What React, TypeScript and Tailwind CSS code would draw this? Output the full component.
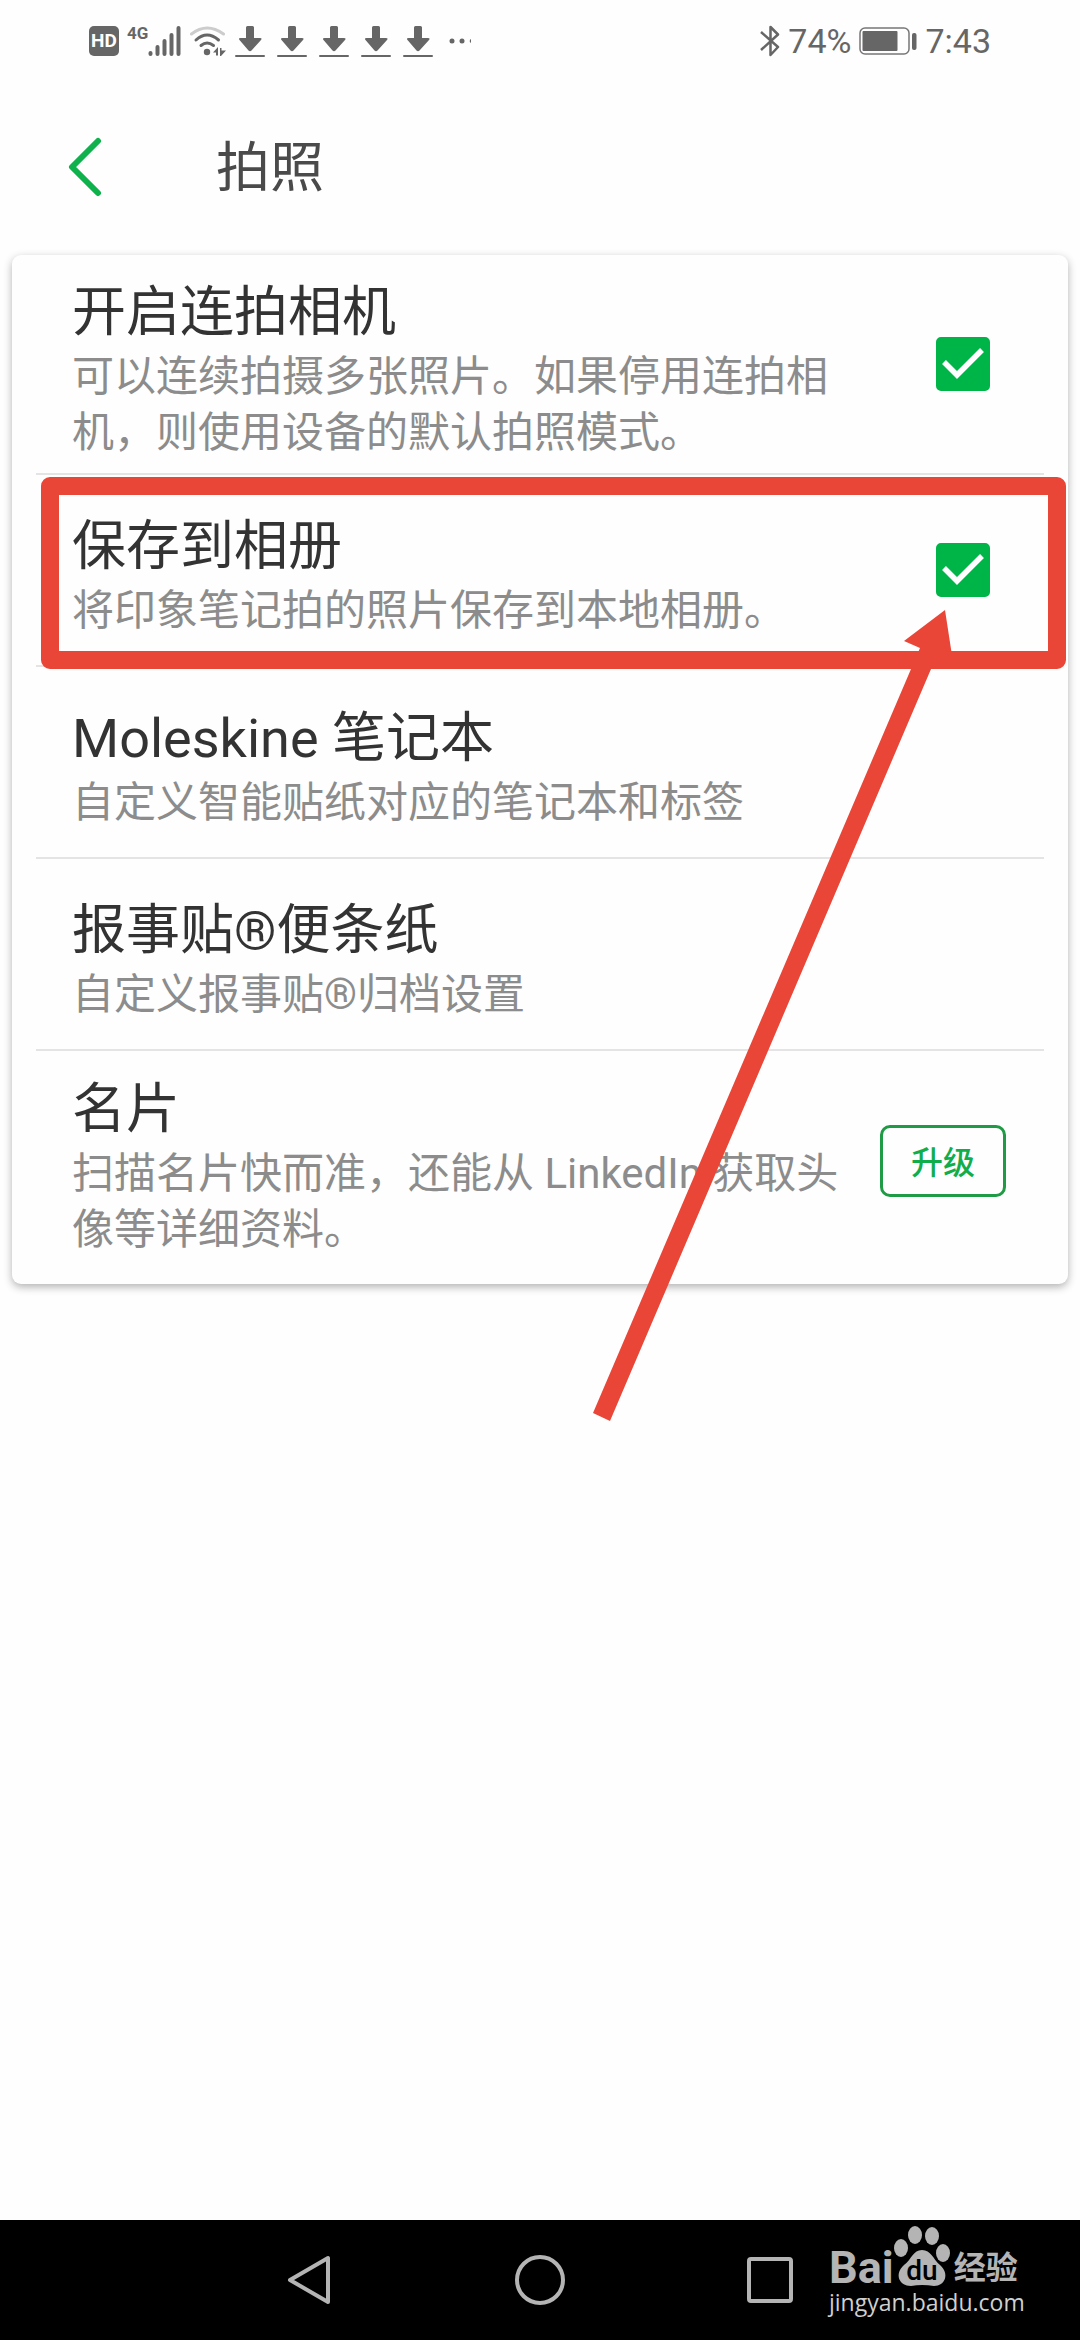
import React, { useState } from "react";

interface Setting {
  id: string;
  title: string;
  description: string;
  control?: "checkbox" | "upgrade";
  highlighted?: boolean;
}

const settings: Setting[] = [
  {
    id: "burst",
    title: "开启连拍相机",
    description: "可以连续拍摄多张照片。如果停用连拍相机，则使用设备的默认拍照模式。",
    control: "checkbox",
  },
  {
    id: "album",
    title: "保存到相册",
    description: "将印象笔记拍的照片保存到本地相册。",
    control: "checkbox",
    highlighted: true,
  },
  {
    id: "moleskine",
    title: "Moleskine 笔记本",
    description: "自定义智能贴纸对应的笔记本和标签",
  },
  {
    id: "postit",
    title: "报事贴®便条纸",
    description: "自定义报事贴®归档设置",
  },
  {
    id: "card",
    title: "名片",
    description: "扫描名片快而准，还能从 LinkedIn 获取头像等详细资料。",
    control: "upgrade",
  },
];

function DownloadIcon() {
  return (
    <svg width="30" height="32" viewBox="0 0 30 32" fill="#666">
      <path d="M11 2.5Q11 1 12.500 1H17.500Q19 1 19 2.500V13H25Q27.500 13 26 15L16.500 25.500Q15 27 13.500 25.500L4.500 15Q3 13 5.500 13H11Z" />
      <rect x="0" y="30" width="30" height="2" rx="1" />
    </svg>
  );
}

function StatusBar() {
  return (
    <div className="flex h-[82px] items-center justify-between pr-[89px] pl-[89px] text-[34px] leading-10 text-[#666]">
      <div className="flex items-center">
        <span className="flex size-[30px] items-center justify-center rounded-[5px] bg-[#666] text-[19px] leading-5 font-bold text-white">
          HD
        </span>
        <span className="ml-2 self-start text-[17px] leading-4 font-bold">4G</span>
        <svg width="33" height="32" viewBox="0 0 33 32" stroke="#666" strokeWidth="4" strokeLinecap="round">
          <path d="M2.500 28V29M9.500 22V29M16.500 16V29M23.500 10V29M30.500 3V29" />
        </svg>
        <svg className="ml-2" width="38" height="32" viewBox="0 0 38 32" fill="none" strokeLinecap="round" strokeWidth="3">
          <path d="M2.500 9Q18 -3 34.500 9" stroke="#ccc" />
          <path d="M7 15Q18 5 29.500 15M12 20.500Q18 15.500 24.500 20.500" stroke="#666" />
          <circle cx="18" cy="27" r="3.200" fill="#666" />
          <path d="M24 27.500L29 22V30.500H27V27.500ZM31 23H32.500V25.500H37L32 31H31Z" fill="#666" />
        </svg>
        <div className="ml-2 flex gap-3">
          <DownloadIcon />
          <DownloadIcon />
          <DownloadIcon />
          <DownloadIcon />
          <DownloadIcon />
        </div>
        <svg className="ml-4" width="22" height="6" viewBox="0 0 22 6" fill="#666">
          <circle cx="3" cy="3" r="2.500" />
          <circle cx="13" cy="3" r="2.500" />
          <path d="M22 1A2.200 2.200 0 0 0 22 5Z" />
        </svg>
      </div>
      <div className="flex items-center">
        <svg width="20" height="32" viewBox="0 0 20 32" fill="none" stroke="#666" strokeWidth="2.500" strokeLinejoin="round">
          <path d="M1 7L18 22L10.500 30V2L18 9.500L1 25" />
        </svg>
        <span className="ml-2">74%</span>
        <svg className="ml-2" width="58" height="28" viewBox="0 0 58 28" fill="#666">
          <rect x="1" y="1" width="49" height="26" rx="5" fill="none" stroke="#777" strokeWidth="1.500" />
          <rect x="3.500" y="4" width="35" height="20" rx="1" />
          <rect x="53" y="6" width="4.500" height="17" rx="2" />
        </svg>
        <span className="ml-2">7:43</span>
      </div>
    </div>
  );
}

function Annotation() {
  return (
    <>
      <div className="pointer-events-none absolute top-[2px] -right-[22px] -bottom-[4px] left-[5px] z-10 rounded-[9px] border-[18px] border-[#ea4637]" />
      <svg
        className="pointer-events-none absolute top-[134px] right-[89px] z-10"
        width="363"
        height="814"
        viewBox="0 0 363 814"
        fill="#ea4637"
      >
        <path d="M353 1L312 32L328 39L1 804L18 812L345 46L361 53Z" />
      </svg>
    </>
  );
}

function SettingRow({ setting, last }: { setting: Setting; last: boolean }) {
  const [checked, setChecked] = useState(true);

  return (
    <div
      className={`relative mx-6 flex items-center py-3 pl-9 ${
        setting.control && !setting.highlighted ? "min-h-[220px]" : "min-h-[192px]"
      } ${last ? "" : "border-b-2 border-[#e4e4e4]"}`}
    >
      <label htmlFor={setting.id} className="flex-1 pt-[10px]">
        <span className="block text-[54px] leading-[72px] text-[#333]">{setting.title}</span>
        <span className="block text-[42px] leading-14 text-[#8c8c8c]">{setting.description}</span>
      </label>

      {setting.control === "checkbox" && (
        <div className="flex w-[204px] justify-end pr-[54px]">
          <span className="relative size-[54px]">
            <input
              id={setting.id}
              type="checkbox"
              checked={checked}
              onChange={(e) => setChecked(e.target.checked)}
              className="block size-[54px] appearance-none rounded-[5px] border-4 border-[#00b548] checked:bg-[#00b548]"
            />
            {checked && (
              <svg
                className="pointer-events-none absolute inset-0"
                width="54"
                height="54"
                viewBox="0 0 54 54"
                fill="none"
                stroke="#fff"
                strokeWidth="5.500"
              >
                <path d="M8 25L21 38L46 13" />
              </svg>
            )}
          </span>
        </div>
      )}

      {setting.control === "upgrade" && (
        <div className="flex w-[204px] justify-end pr-[38px]">
          <button
            id={setting.id}
            type="button"
            className="h-[72px] w-[126px] rounded-[10px] border-3 border-[#1f9a45] pt-1 text-[32px] leading-10 font-medium text-[#12ad4b]"
          >
            升级
          </button>
        </div>
      )}

      {setting.highlighted && <Annotation />}
    </div>
  );
}

function Watermark() {
  return (
    <div className="absolute top-[4px] right-[55px] w-[196px] text-[#b4b4b4]">
      <div className="flex h-[62px] items-end">
        <span className="text-[45px] leading-9 font-bold">Bai</span>
        <svg width="56" height="62" viewBox="0 0 56 62" fill="#b4b4b4">
          <ellipse cx="7" cy="24" rx="7" ry="9" />
          <ellipse cx="21" cy="11" rx="7" ry="9" />
          <ellipse cx="38" cy="12" rx="7" ry="9" />
          <ellipse cx="49" cy="29" rx="7" ry="9" />
          <path d="M28 26C37 26 39 35 46 41C56 50 51 62 40 62Q28 60 17 62C5 62 0 50 10 41C18 35 19 26 28 26Z" />
          <text x="28" y="56" textAnchor="middle" fontSize="28" fontFamily="Roboto, sans-serif" fontWeight="500" fill="#000">
            du
          </text>
        </svg>
        <span className="ml-1 text-[32px] leading-9 font-bold">经验</span>
      </div>
      <div className="pt-[2px] font-['Open_Sans',sans-serif] text-[23px] leading-7 text-[#d0d0d0]">
        jingyan.baidu.com
      </div>
    </div>
  );
}

function NavBar() {
  return (
    <nav className="relative flex h-[120px] items-center justify-between bg-black px-[287px]">
      <button type="button" aria-label="Back">
        <svg width="46" height="60" viewBox="0 0 46 60" fill="none" stroke="#b4b4b4" strokeWidth="4" strokeLinejoin="round">
          <path d="M41 8V52L3 30Z" />
        </svg>
      </button>
      <button type="button" aria-label="Home">
        <svg width="50" height="50" viewBox="0 0 50 50" fill="none" stroke="#b4b4b4" strokeWidth="4">
          <circle cx="25" cy="25" r="23" />
        </svg>
      </button>
      <button type="button" aria-label="Recents">
        <svg width="46" height="46" viewBox="0 0 46 46" fill="none" stroke="#b4b4b4" strokeWidth="4">
          <rect x="2" y="2" width="42" height="42" rx="2" />
        </svg>
      </button>
      <Watermark />
    </nav>
  );
}

export default function App() {
  return (
    <div
      lang="zh-CN"
      className="flex min-h-screen flex-col bg-[#fefefe] font-[Roboto,'Noto_Sans_CJK_SC',sans-serif]"
    >
      <StatusBar />

      <header className="flex h-[173px] items-center pl-[67px]">
        <button type="button" aria-label="返回">
          <svg width="36" height="64" viewBox="0 0 36 64" fill="none" stroke="#0fb14c" strokeWidth="6" strokeLinecap="round" strokeLinejoin="round">
            <path d="M31 4L5 30L31 56" />
          </svg>
        </button>
        <h1 className="ml-[113px] text-[54px] leading-[72px] text-[#4a4a4a]">拍照</h1>
      </header>

      <main className="flex-1 px-3">
        <section className="rounded-[9px] bg-[#fefefe] pb-[13px] shadow-[0_3px_8px_rgba(0,0,0,0.3)]">
          {settings.map((setting, i) => (
            <SettingRow key={setting.id} setting={setting} last={i === settings.length - 1} />
          ))}
        </section>
      </main>

      <NavBar />
    </div>
  );
}
